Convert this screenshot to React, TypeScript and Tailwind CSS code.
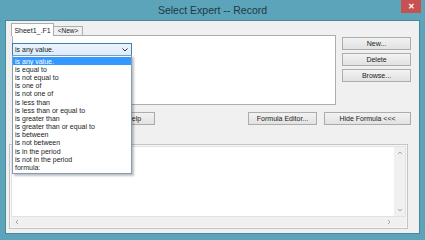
const options = [
  "is any value.",
  "is equal to",
  "is not equal to",
  "is one of",
  "is not one of",
  "is less than",
  "is less than or equal to",
  "is greater than",
  "is greater than or equal to",
  "is between",
  "is not between",
  "is in the period",
  "is not in the period",
  "formula:",
];

function Btn({ label, className }: { label: string; className: string }) {
  return (
    <div
      className={
        "flex h-[13px] items-center justify-center border border-[#acacac] bg-gradient-to-b from-[#f2f2f2] to-[#e2e2e2] text-[7px] leading-none text-[#1a1a1a] " +
        className
      }
    >
      {label}
    </div>
  );
}

function Chevron({ d }: { d: string }) {
  return (
    <svg width="6" height="6" viewBox="0 0 6 6" className="text-[#a6a6a6]">
      <path d={d} fill="none" stroke="currentColor" strokeWidth="1" />
    </svg>
  );
}

export default function App() {
  return (
    <div
      className="flex h-[240px] w-[425px] flex-col bg-[#5ba4b9] pl-[5px] pr-[5px]"
      style={{ fontFamily: '"Liberation Sans", Arial, sans-serif' }}
    >
      {/* title bar */}
      <div className="grid h-[20px] grid-cols-[1fr_auto_1fr] items-start">
        <div />
        <div className="pt-[3px] text-[10.5px] leading-[14px] text-[#1f3a47]">Select Expert -- Record</div>
        <div className="flex justify-end pr-[-1px]">
          <div className="mr-[-1px] flex h-[13px] w-[20px] items-center justify-center bg-[#c75050] text-[8px] font-bold leading-none text-white">
            ✕
          </div>
        </div>
      </div>

      {/* client area */}
      <div className="flex h-[214px] flex-col border border-[#4b8799] bg-[#f0f0f0]">
        {/* top section */}
        <div className="flex">
          <div className="ml-[5px] mt-[2px] flex w-[325px] flex-col">
            <div className="flex items-end">
              <div className="z-10 mb-[-1px] flex h-[13px] w-[43px] items-center justify-center border border-b-0 border-[#adadad] bg-white text-[7px] leading-none text-[#1a1a1a]">
                Sheet1_.F1
              </div>
              <div className="flex h-[9px] w-[29px] items-center justify-center border border-b-0 border-l-0 border-[#adadad] bg-[#f0f0f0] text-[6.5px] leading-none text-[#1a1a1a]">
                &lt;New&gt;
              </div>
            </div>
            <div className="relative ml-[1px] h-[70px] w-[324px] border border-[#adadad] bg-white">
              <div className="relative ml-[-1px] mt-[7px] w-[120px]">
                <div className="flex h-[13px] items-center justify-between border border-[#3c7fb1] bg-gradient-to-b from-[#ecf4fc] to-[#dcecfc] pl-[2px] pr-[3px] text-[7px] leading-none text-[#1a1a1a]">
                  <span>is any value.</span>
                  <svg width="6" height="4" viewBox="0 0 6 4">
                    <path d="M0.5 0.5 L3 3 L5.5 0.5" fill="none" stroke="#333" strokeWidth="1" />
                  </svg>
                </div>
                <div className="absolute left-0 top-[12px] z-20 w-[120px] border border-[#7f9db9] bg-white py-[1px] shadow-[2px_2px_2px_rgba(0,0,0,0.25)]">
                  {options.map((o, i) => (
                    <div
                      key={o}
                      className={
                        "flex h-[8.2px] items-center pl-[2px] text-[7px] leading-none " +
                        (i === 0 ? "bg-[#3399ff] text-white" : "text-[#1a1a1a]")
                      }
                    >
                      {o}
                    </div>
                  ))}
                </div>
              </div>
            </div>
          </div>
          <div className="ml-[6px] mt-[16px] flex w-[69px] flex-col gap-[3px]">
            <Btn label="New..." className="w-[69px]" />
            <Btn label="Delete" className="w-[69px]" />
            <Btn label="Browse..." className="w-[69px]" />
          </div>
        </div>

        {/* button row */}
        <div className="mt-[7px] flex">
          <Btn label="Help" className="ml-[107px] w-[42px]" />
          <Btn label="Formula Editor..." className="ml-[93px] w-[69px]" />
          <Btn label="Hide Formula <<<" className="ml-[7px] w-[87px]" />
        </div>

        {/* formula box */}
        <div className="ml-[3px] mt-[19px] flex h-[85px] w-[399px] flex-col border border-[#c4c4c4] bg-[#f7f7f7] p-[1px]">
          <div className="flex flex-1 border border-[#e2e2e2] bg-white">
            <div className="flex-1" />
            <div className="flex w-[11px] flex-col items-center justify-between bg-[#f0f0f0] py-[3px]">
              <Chevron d="M1 4 L3 2 L5 4" />
              <Chevron d="M1 2 L3 4 L5 2" />
            </div>
          </div>
          <div className="flex h-[10px] items-center justify-between bg-[#f0f0f0] pl-[3px] pr-[14px]">
            <Chevron d="M4 1 L2 3 L4 5" />
            <Chevron d="M2 1 L4 3 L2 5" />
          </div>
        </div>
      </div>
      <div className="flex-1" />
    </div>
  );
}
